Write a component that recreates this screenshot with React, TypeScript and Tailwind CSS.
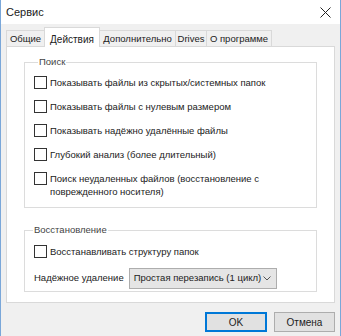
const font = { fontFamily: '"Liberation Sans", Arial, sans-serif' };

const Check = ({ label }: { label: string }) => (
  <div className="flex items-start gap-[3px]">
    <div className="h-[13px] w-[13px] shrink-0 border border-[#333] bg-white" />
    <span className="leading-[13px]">{label}</span>
  </div>
);

const tabs = [
  { t: 'Общие', w: 'w-[39px]' },
  { t: 'Действия', w: 'w-[56px]' },
  { t: 'Дополнительно', w: 'w-[77px]' },
  { t: 'Drives', w: 'w-[32px]' },
  { t: 'О программе', w: 'w-[66px]' },
];

export default function App() {
  return (
    <div
      className="flex h-[336px] w-[341px] flex-col border-x border-[#7aa7d9] bg-[#f0f0f0] text-[9.5px] text-[#222]"
      style={font}
    >
      {/* title bar */}
      <div className="flex h-[24px] items-center justify-between bg-white pl-[5px] pr-[9px]">
        <span className="text-[11px]">Сервис</span>
        <svg width="11" height="11" viewBox="0 0 11 11" stroke="#222" strokeWidth="1">
          <path d="M0.5 0.5l10 10M10.5 0.5l-10 10" />
        </svg>
      </div>

      {/* tabs */}
      <div className="mt-[6px] flex h-[16px] items-end pl-[5px]">
        {tabs.map(({ t, w }, i) =>
          i === 1 ? (
            <div
              key={t}
              className={`relative z-10 -mb-px -ml-px h-[20px] shrink-0 border border-b-0 border-[#d9d9d9] bg-white pt-[4px] text-center text-[10px] ${w}`}
            >
              {t}
            </div>
          ) : (
            <div
              key={t}
              className={`h-[16px] shrink-0 border border-b-0 border-[#d9d9d9] bg-[#f0f0f0] pt-[1px] text-center leading-[14px] -ml-px first:ml-0 ${w}`}
            >
              {t}
            </div>
          ),
        )}
      </div>

      {/* tab panel */}
      <div className="mx-[5px] flex h-[257px] flex-col gap-[17px] border border-[#d9d9d9] bg-white px-[17px] pt-[10px]">
        <fieldset className="h-[151px] border border-[#dcdcdc] px-[9px] pt-[9px]">
          <legend className="ml-[4px] px-[1px] leading-[10px] text-[#444]">Поиск</legend>
          <div className="flex flex-col gap-[11px]">
            <Check label="Показывать файлы из скрытых/системных папок" />
            <Check label="Показывать файлы с нулевым размером" />
            <Check label="Показывать надёжно удалённые файлы" />
            <Check label="Глубокий анализ (более длительный)" />
            <Check label="Поиск неудаленных файлов (восстановление с поврежденного носителя)" />
          </div>
        </fieldset>

        <fieldset className="h-[67px] border border-[#dcdcdc] px-[9px] pt-[10px]">
          <legend className="ml-[-1px] px-[1px] leading-[10px] text-[#444]">Восстановление</legend>
          <Check label="Восстанавливать структуру папок" />
          <div className="mt-[10px] flex items-center gap-[5px]">
            <span className="whitespace-nowrap">Надёжное удаление</span>
            <div className="flex h-[21px] w-[148px] items-center justify-between whitespace-nowrap border border-[#adadad] bg-[#e5e5e5] pl-[4px] pr-[5px]">
              <span>Простая перезапись (1 цикл)</span>
              <svg width="8" height="5" viewBox="0 0 8 5" fill="none" stroke="#555">
                <path d="M0.5 0.5l3.5 3.5 3.5-3.5" />
              </svg>
            </div>
          </div>
        </fieldset>
      </div>

      {/* buttons */}
      <div className="mt-[9px] flex justify-end gap-[7px] pr-[5px]">
        <button className="h-[20px] w-[62px] border border-[#0078d7] bg-[#e1e1e1] text-[10px] shadow-[inset_0_0_0_1px_#0078d7]">
          OK
        </button>
        <button className="h-[20px] w-[61px] border border-[#adadad] bg-[#e1e1e1] text-[10px]">Отмена</button>
      </div>
    </div>
  );
}
